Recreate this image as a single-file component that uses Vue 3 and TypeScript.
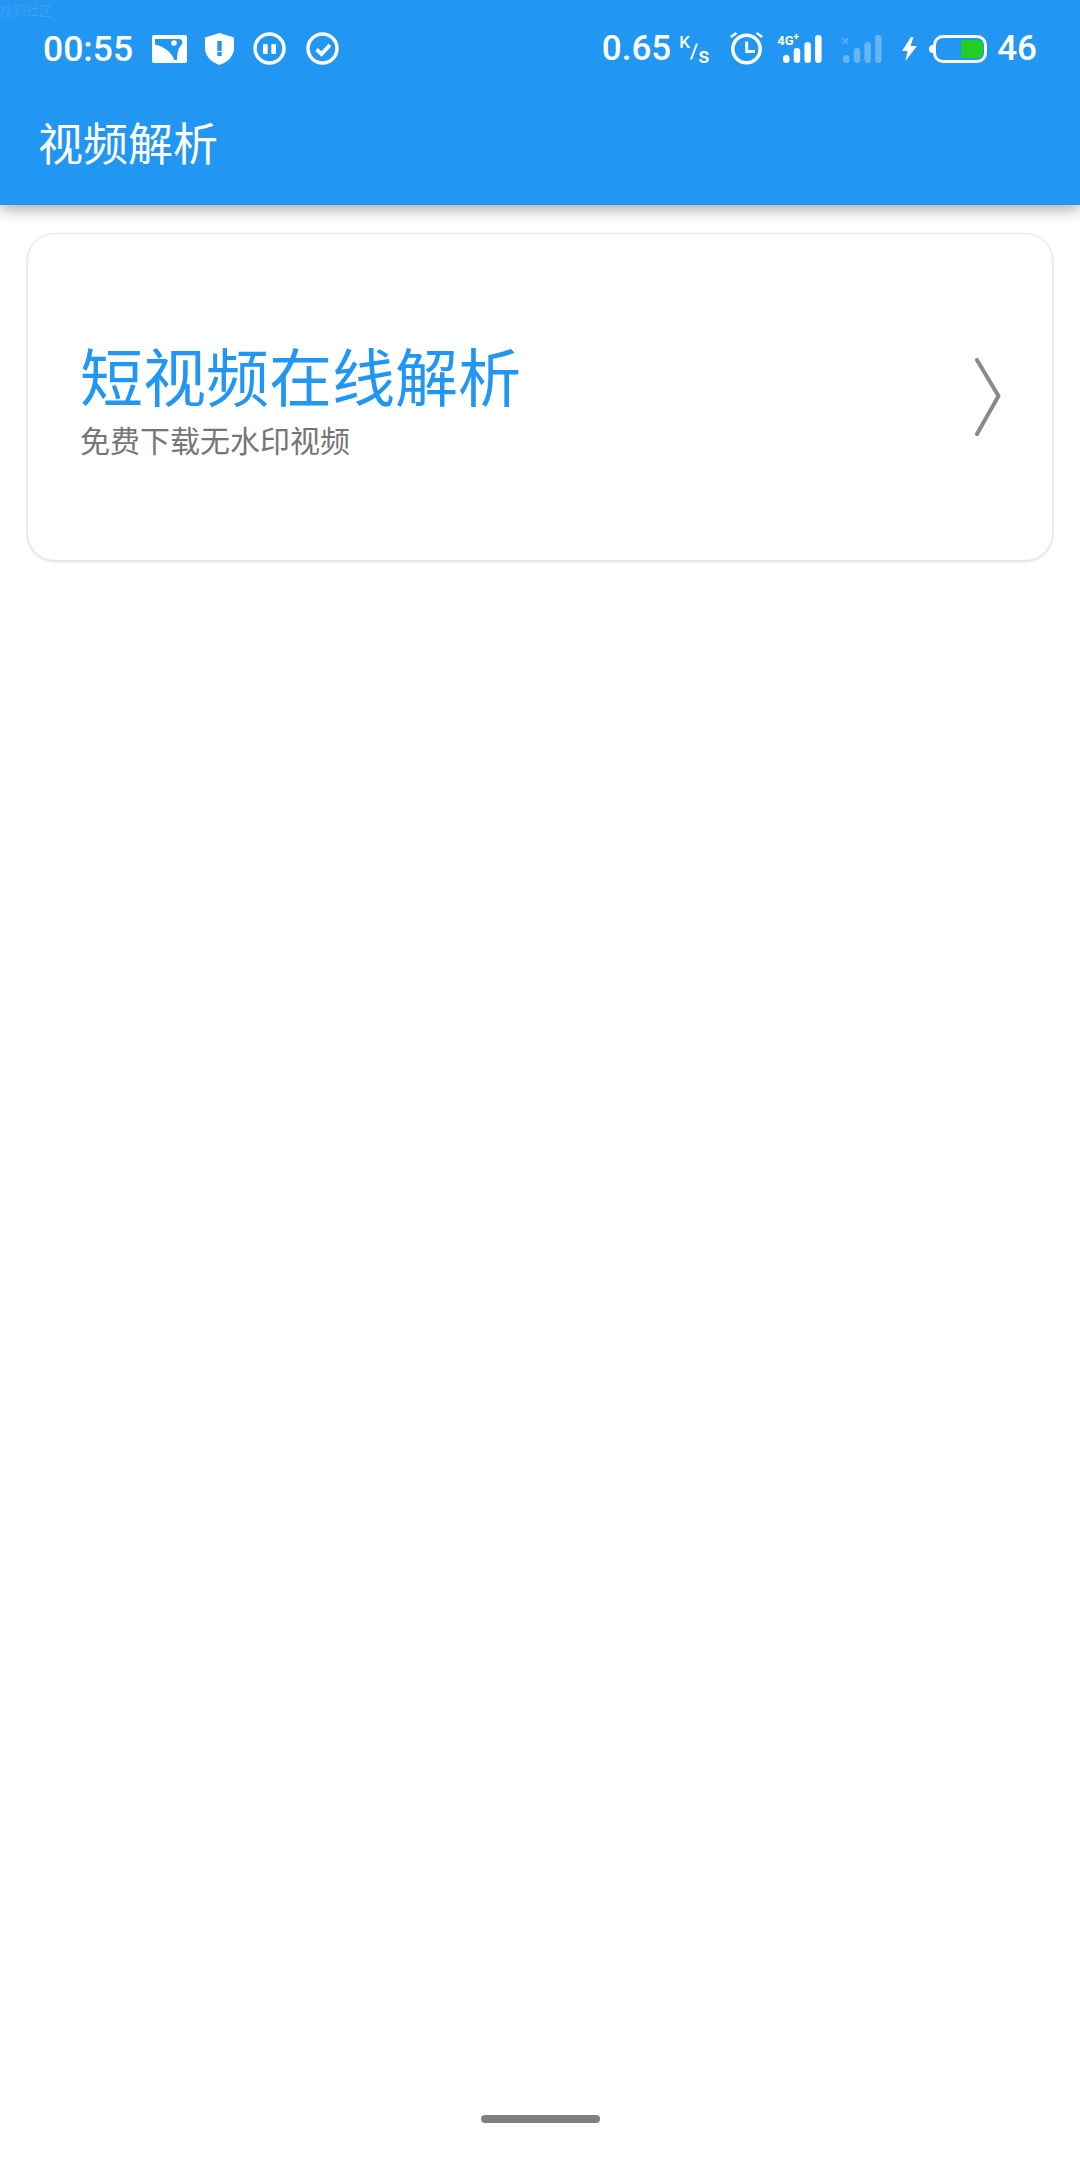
<script setup lang="ts">
const signalBars = [
  { x: 0, y: 20, h: 8 },
  { x: 10.7, y: 13, h: 15 },
  { x: 21.4, y: 7, h: 21 },
  { x: 32.1, y: 0, h: 28 }
]
</script>

<template>
  <div class="page">
    <header class="appbar">
      <span class="watermark">搜狐社区</span>
      <div class="status">
        <div class="status-left">
          <span class="time">00:55</span>
          <svg class="ic-pic" width="35" height="28" viewBox="0 0 35 28">
            <rect width="35" height="28" rx="2" fill="#fff" />
            <path fill="#2196f3" d="M3 4H27C30 4 31 7 30 9L27 13C25.500 17 25 21 25 25H22.500C19 17 13 12 3 9.500Z" />
            <circle cx="22" cy="8" r="2.800" fill="#fff" />
          </svg>
          <svg class="ic-shield" width="29" height="32" viewBox="0 0 29 32">
            <path fill="#fff" d="M14.500 0 29 4.500V15c0 8-6 14-14.500 17C6 29 0 23 0 15V4.500Z" />
            <rect x="12.300" y="8" width="4.400" height="10" fill="#2196f3" />
            <rect x="12.300" y="19" width="4.400" height="4" fill="#2196f3" />
          </svg>
          <svg class="ic-pause" width="33" height="33" viewBox="0 0 33 33">
            <circle cx="16.500" cy="16.500" r="14.500" fill="none" stroke="#fff" stroke-width="3.500" />
            <rect x="10" y="12" width="4.700" height="10" rx="1" fill="#fff" />
            <rect x="18.300" y="12" width="4.700" height="10" rx="1" fill="#fff" />
          </svg>
          <svg class="ic-check" width="33" height="33" viewBox="0 0 33 33">
            <circle cx="16.500" cy="16.500" r="14.500" fill="none" stroke="#fff" stroke-width="3.500" />
            <path d="m10.500 17.500 5 4.500 8.500-9" fill="none" stroke="#fff" stroke-width="3.800" />
          </svg>
        </div>
        <div class="status-right">
          <span class="speed">0.65</span>
          <span class="unit"><i class="k">K</i><svg class="slash" width="8" height="17" viewBox="0 0 8 17"><path d="M7 0.500 1 16.500" stroke="#fff" stroke-width="2" /></svg><i class="s">s</i></span>
          <svg class="ic-alarm" width="33" height="33" viewBox="0 0 33 33">
            <circle cx="16.500" cy="17" r="13.700" fill="none" stroke="#fff" stroke-width="3.500" />
            <path d="M16.700 9.500V19.500H25" fill="none" stroke="#fff" stroke-width="3" />
            <path d="M0.800 5 6.500 1M32.200 5 26.500 1" stroke="#fff" stroke-width="2.500" />
          </svg>
          <div class="net">
            <span class="net-label">4G<sup>+</sup></span>
            <svg class="bars" width="39" height="28" viewBox="0 0 39 28">
              <rect v-for="b in signalBars" :key="b.x" :x="b.x" :y="b.y" width="6.500" :height="b.h" rx="3.250" fill="#fff" />
            </svg>
          </div>
          <div class="net dim">
            <span class="net-x">×</span>
            <svg class="bars" width="39" height="28" viewBox="0 0 39 28">
              <rect v-for="b in signalBars" :key="b.x" :x="b.x" :y="b.y" width="6.500" :height="b.h" rx="3.250" fill="#fff" />
            </svg>
          </div>
          <svg class="ic-bolt" width="15" height="24" viewBox="0 0 15 24">
            <path fill="#fff" d="M9 0 0 14h5.500L3.500 24 15 9H8.500L11.500 0Z" />
          </svg>
          <div class="battery">
            <span class="nub"></span>
            <span class="cell"><span class="fill"></span></span>
          </div>
          <span class="level">46</span>
        </div>
      </div>
      <div class="toolbar">视频解析</div>
    </header>

    <main class="content">
      <section class="card">
        <div class="card-text">
          <h1 class="card-title">短视频在线解析</h1>
          <p class="card-sub">免费下载无水印视频</p>
        </div>
        <svg class="chevron" width="26" height="78" viewBox="0 0 26 78">
          <path d="M2 2 23.500 38 2 76" fill="none" stroke="#8a8a8a" stroke-width="4" stroke-linecap="round" stroke-linejoin="round" />
        </svg>
      </section>
    </main>

    <div class="home-bar"></div>
  </div>
</template>

<style>
html, body { margin: 0; background: #fff; }
</style>

<style scoped>
.page {
  width: 1080px;
  height: 2160px;
  display: flex;
  flex-direction: column;
  background: #fff;
  font-family: "Noto Sans CJK SC", "Noto Sans", sans-serif;
  position: relative;
  overflow: hidden;
}
.appbar {
  height: 205px;
  flex: none;
  background: #2196f3;
  color: #fff;
  box-shadow: 0 5px 14px rgba(0, 0, 0, 0.32);
  position: relative;
  z-index: 1;
}
.watermark {
  position: absolute;
  left: 0;
  top: 0;
  font-size: 13px;
  color: rgba(255, 255, 255, 0.12);
}
.status {
  height: 96px;
  padding: 1px 43px 0 43px;
  box-sizing: border-box;
  display: flex;
  align-items: center;
  justify-content: space-between;
}
.status-left, .status-right { display: flex; align-items: center; }
.time, .speed, .level {
  font-family: Roboto, sans-serif;
  font-weight: 500;
  font-size: 35px;
  line-height: 40px;
}
.time { font-size: 35.5px; }
.ic-pic { margin-left: 19px; }
.ic-shield { margin-left: 18px; }
.ic-pause { margin-left: 19px; }
.ic-check { margin-left: 20px; }
.unit {
  position: relative;
  width: 31px;
  height: 32px;
  margin-left: 8px;
  font-family: Roboto, sans-serif;
  font-weight: 500;
  line-height: 1;
}
.unit i { position: absolute; font-style: normal; }
.k { left: 0; top: 1px; font-size: 17px; }
.slash { position: absolute; left: 11px; top: 10px; }
.s { left: 19px; top: 12px; font-size: 22px; }
.ic-alarm { margin-left: 20px; }
.net {
  position: relative;
  width: 45px;
  height: 28px;
  margin-left: 14px;
  display: flex;
  justify-content: flex-end;
}
.bars { display: block; }
.net-label {
  position: absolute;
  left: 0;
  top: 0;
  font-family: Roboto, sans-serif;
  font-weight: 700;
  font-size: 13px;
  line-height: 11px;
}
.net-label sup { font-size: 10px; line-height: 0; }
.net.dim { opacity: 0.3; margin-left: 20px; width: 40px; }
.net-x { position: absolute; left: -1px; top: -1px; font-family: Roboto, sans-serif; font-size: 15px; line-height: 14px; }
.ic-bolt { margin-left: 20px; }
.battery { display: flex; align-items: center; margin-left: 12px; }
.nub { width: 4px; height: 8px; background: #fff; border-radius: 4px 0 0 4px; }
.cell {
  width: 54px;
  height: 28px;
  box-sizing: border-box;
  border: 3px solid #fff;
  border-radius: 10px;
  display: flex;
  justify-content: flex-end;
  padding: 2px 1px;
}
.fill { width: 22px; background: #21cf21; border-radius: 0 6px 6px 0; }
.level { margin-left: 10px; }
.toolbar {
  height: 109px;
  padding: 0 0 18px 38px;
  box-sizing: border-box;
  font-size: 45px;
  line-height: 91px;
}
.content { padding: 28px 27px 0; flex: 1; }
.card {
  height: 328px;
  box-sizing: border-box;
  background: #fff;
  border: 1px solid #e6e6e6;
  border-radius: 28px;
  box-shadow: 0 1px 3px rgba(0, 0, 0, 0.14);
  padding: 0 51px 0 52px;
  display: flex;
  align-items: center;
  justify-content: space-between;
}
.card-text { display: flex; flex-direction: column; gap: 10px; padding-top: 3px; }
.card-title {
  margin: 0;
  font-weight: 400;
  font-size: 63px;
  line-height: 70px;
  color: #2196f3;
}
.card-sub {
  margin: 0;
  font-size: 30px;
  line-height: 40px;
  color: #757575;
}
.chevron { flex: none; }
.home-bar {
  position: absolute;
  left: 481px;
  top: 2115px;
  width: 119px;
  height: 8px;
  border-radius: 4px;
  background: #7f7f7f;
}
</style>
